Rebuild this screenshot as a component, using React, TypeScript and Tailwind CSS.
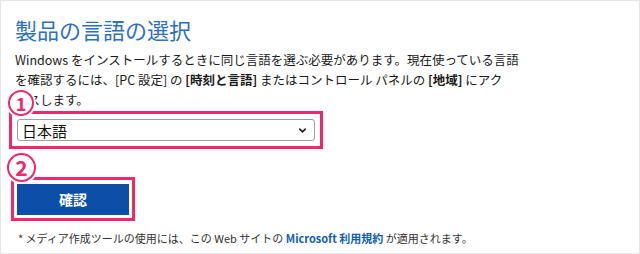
import { ChevronDown } from "lucide-react";

function Badge({ n, className }: { n: string; className: string }) {
  return (
    <div
      className={`absolute flex items-center justify-center rounded-full border-2 border-[#f0286a] bg-white text-[#f0286a] font-bold shadow-[0_0_0_2px_white] ${className}`}
    >
      {n}
    </div>
  );
}

export default function App() {
  return (
    <div
      className="w-[640px] h-[254px] border border-[#e6e6e6] bg-white text-[#222] overflow-hidden"
      style={{ fontFamily: '"Noto Sans CJK JP", "Noto Sans", sans-serif' }}
    >
      <div className="flex flex-col items-start pl-[14px] pt-[13px]">
        <h2 className="text-[22px] leading-[30px] text-[#2d6fc2] font-normal">製品の言語の選択</h2>

        <p className="mt-[6px] w-[520px] text-[12.5px] leading-[20px] text-[#1a1a1a]">
          Windows をインストールするときに同じ言語を選ぶ必要があります。現在使っている言語
          <br />
          を確認するには、[PC 設定] の <b>[時刻と言語]</b> またはコントロール パネルの <b>[地域]</b> にアク
          <br />
          セスします。
        </p>

        {/* select */}
        <div className="relative ml-[2px] mt-[9px] w-[298px]">
          <div className="absolute -left-[8px] -right-[8px] -top-[8px] -bottom-[8px] border-[3px] border-[#f0286a]" />
          <div className="relative flex h-[22px] items-center rounded-[3px] border border-[#a0a0a0] bg-white pl-[4px] pr-[6px]">
            <span className="flex-1 text-[15px] leading-none text-[#111]">日本語</span>
            <ChevronDown className="h-[11px] w-[11px] text-[#222]" strokeWidth={3.5} />
          </div>
          <Badge n="1" className="-left-[9px] -top-[29px] h-[26px] w-[26px] text-[18px]" />
        </div>

        {/* button */}
        <div className="relative ml-[2px] mt-[43px] w-[112px]">
          <div className="absolute -left-[6px] -right-[6px] -top-[7px] -bottom-[6px] border-[3px] border-[#f0286a]" />
          <button className="relative flex h-[31px] w-[112px] items-center justify-center bg-[#0b4fa8] text-[14px] font-bold text-white">
            確認
          </button>
          <Badge n="2" className="-left-[10px] -top-[31px] h-[29px] w-[29px] text-[21px]" />
        </div>

        <p className="ml-[3px] mt-[15px] text-[11px] leading-[16px] text-[#333]">
          * メディア作成ツールの使用には、この Web サイトの{" "}
          <span className="font-bold text-[#0f5eb0]">Microsoft 利用規約</span> が適用されます。
        </p>
      </div>
    </div>
  );
}
